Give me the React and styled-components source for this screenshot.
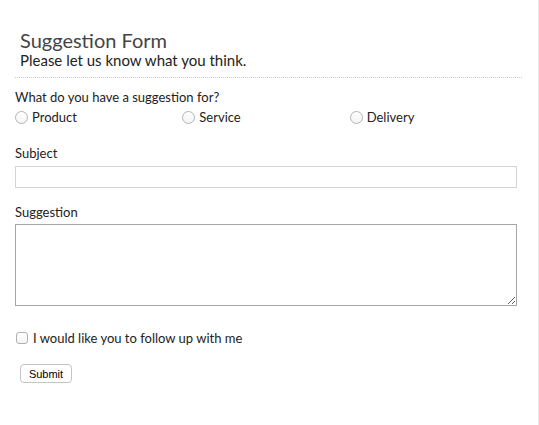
import React from 'react';
import styled, { createGlobalStyle } from 'styled-components';

const GlobalStyle = createGlobalStyle`
  html, body {
    margin: 0;
    padding: 0;
    background: #fff;
  }
  body {
    font-family: Lato, "Open Sans", sans-serif;
    color: #333;
  }
  * {
    box-sizing: border-box;
  }
`;

const Page = styled.div`
  width: 539px;
  height: 425px;
  border-right: 1px solid #e6e6e6;
  padding: 0 21px 0 15px;
`;

const Header = styled.header`
  padding: 28px 0 8px 5px;
  margin-right: -5px;
  border-bottom: 1px dotted #c8c8c8;
`;

const Title = styled.h1`
  margin: 0;
  font-size: 20px;
  line-height: 24px;
  font-weight: 400;
  color: #444;
`;

const Subtitle = styled.p`
  margin: -1px 0 0;
  font-size: 15px;
  line-height: 18px;
  color: #222;
`;

const Form = styled.form`
  display: flex;
  flex-direction: column;
  padding-top: 11px;
`;

const Label = styled.div`
  font-size: 13px;
  line-height: 16px;
  color: #222;
  margin-top: ${(p) => p.$top || 0}px;
`;

const Options = styled.div`
  display: grid;
  grid-template-columns: repeat(3, 1fr);
  margin-top: 3px;
`;

const Choice = styled.label`
  display: flex;
  align-items: center;
  gap: 4px;
  height: 18px;
  font-size: 13px;
  color: #222;
`;

const Radio = styled.input.attrs({ type: 'radio' })`
  appearance: none;
  margin: 0;
  width: 13px;
  height: 13px;
  border-radius: 50%;
  border: 1px solid #b4b4b4;
  background: linear-gradient(#fff, #f4f4f4);
`;

const Check = styled.input.attrs({ type: 'checkbox' })`
  appearance: none;
  margin: 0 1px 0 1px;
  width: 12px;
  height: 12px;
  border-radius: 3px;
  border: 1px solid #b0b0b0;
  background: linear-gradient(#fff, #f4f4f4);
`;

const TextInput = styled.input`
  margin-top: 5px;
  width: 100%;
  height: 22px;
  border: 1px solid #d4d4d4;
  padding: 2px 4px;
  font: inherit;
  font-size: 13px;
`;

const TextArea = styled.textarea`
  margin-top: 4px;
  width: 100%;
  height: 82px;
  border: 1px solid #a6a6a6;
  padding: 2px 4px;
  font: inherit;
  font-size: 13px;
  resize: both;
`;

const CheckRow = styled(Choice)`
  margin-top: 23px;
`;

const SubmitButton = styled.button`
  align-self: flex-start;
  margin: 17px 0 0 5px;
  width: 52px;
  height: 19px;
  padding: 0;
  background: #fff;
  border: 1px solid #c4c4c4;
  border-radius: 4px;
  font-family: "Liberation Sans", Arial, sans-serif;
  font-size: 11px;
  color: #000;
`;

export default function App() {
  return (
    <>
      <GlobalStyle />
      <Page>
        <Header>
          <Title>Suggestion Form</Title>
          <Subtitle>Please let us know what you think.</Subtitle>
        </Header>
        <Form onSubmit={(e) => e.preventDefault()}>
          <Label>What do you have a suggestion for?</Label>
          <Options>
            <Choice><Radio name="topic" />Product</Choice>
            <Choice><Radio name="topic" />Service</Choice>
            <Choice><Radio name="topic" />Delivery</Choice>
          </Options>
          <Label $top={19}>Subject</Label>
          <TextInput type="text" />
          <Label $top={16}>Suggestion</Label>
          <TextArea />
          <CheckRow><Check />I would like you to follow up with me</CheckRow>
          <SubmitButton type="submit">Submit</SubmitButton>
        </Form>
      </Page>
    </>
  );
}
